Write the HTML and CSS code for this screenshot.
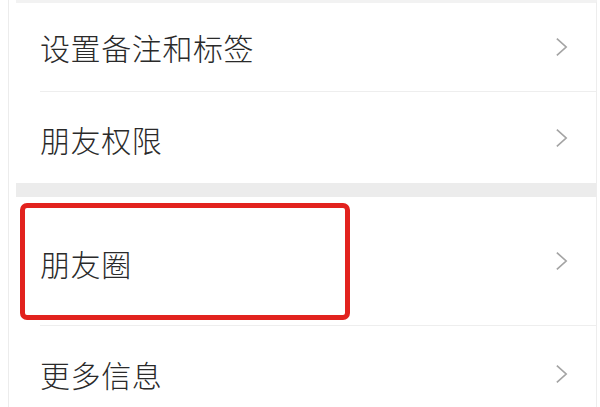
FILE: index.html
```html
<!DOCTYPE html>
<html lang="zh-CN">
<head>
    <meta charset="UTF-8">
    <title>朋友设置</title>
    <link rel="stylesheet" href="styles.css">
</head>
<body>
<div class="frame">
    <div class="panel">
        <div class="row row-a">
            <span class="label">设置备注和标签</span>
            <svg class="arrow" viewBox="0 0 14 22"><path d="M2 2 L12 11 L2 20"/></svg>
        </div>
        <div class="row row-b">
            <span class="label">朋友权限</span>
            <svg class="arrow" viewBox="0 0 14 22"><path d="M2 2 L12 11 L2 20"/></svg>
        </div>
        <div class="gap"></div>
        <div class="row row-c">
            <span class="label">朋友圈</span>
            <svg class="arrow" viewBox="0 0 14 22"><path d="M2 2 L12 11 L2 20"/></svg>
            <!-- 红框标注 -->
            <div class="mark"></div>
        </div>
        <div class="row row-d">
            <span class="label">更多信息</span>
            <svg class="arrow" viewBox="0 0 14 22"><path d="M2 2 L12 11 L2 20"/></svg>
        </div>
    </div>
</div>
</body>
</html>
```
FILE: styles.css
```css
*{
    margin: 0;
    padding: 0;
}

body{
    background: #fff;
    font-family: "Noto Sans CJK SC", "Noto Sans", sans-serif;
    color: #2a2a2a;
    overflow: hidden;
}

.frame{
    margin-left: 8px;
    border-left: 1px solid #ececec;
    height: 407px;
    overflow: hidden;
}

.panel{
    margin-left: 7px;
    margin-right: 3px;
    border-right: 1px solid #ededed;
    border-top: 3px solid #f2f2f2;
}

.row{
    position: relative;
    display: flex;
    align-items: center;
    justify-content: space-between;
    padding-left: 24px;
    padding-right: 28px;
    background: #fff;
}
.row .label{
    font-size: 30px;
    font-weight: 300;
    letter-spacing: 0.6px;
    line-height: 1;
}
.row .arrow{
    width: 13px;
    height: 22px;
    fill: none;
    stroke: #a4a4a4;
    stroke-width: 1.8;
}

.row-a{height: 88px;}
.row-b{height: 91px;}
.row-c{height: 128px;}
.row-d{height: 96px;}

/* 分隔线从文字左边开始 */
.row-a::after, .row-c::after{
    content: "";
    position: absolute;
    left: 24px;
    right: 0;
    bottom: -1px;
    height: 1px;
    background: #eeeeee;
}
.row-a, .row-c{margin-bottom: 1px;}

.row-b .label{margin-top: 2px;}
.row-c .label{margin-top: 4px;}

.gap{
    height: 14px;
    background: #ececec;
}

.mark{
    position: absolute;
    left: 4px;
    top: 6px;
    width: 330px;
    height: 117px;
    border: 5px solid #e2221e;
    border-radius: 7px;
    box-sizing: border-box;
}
```
